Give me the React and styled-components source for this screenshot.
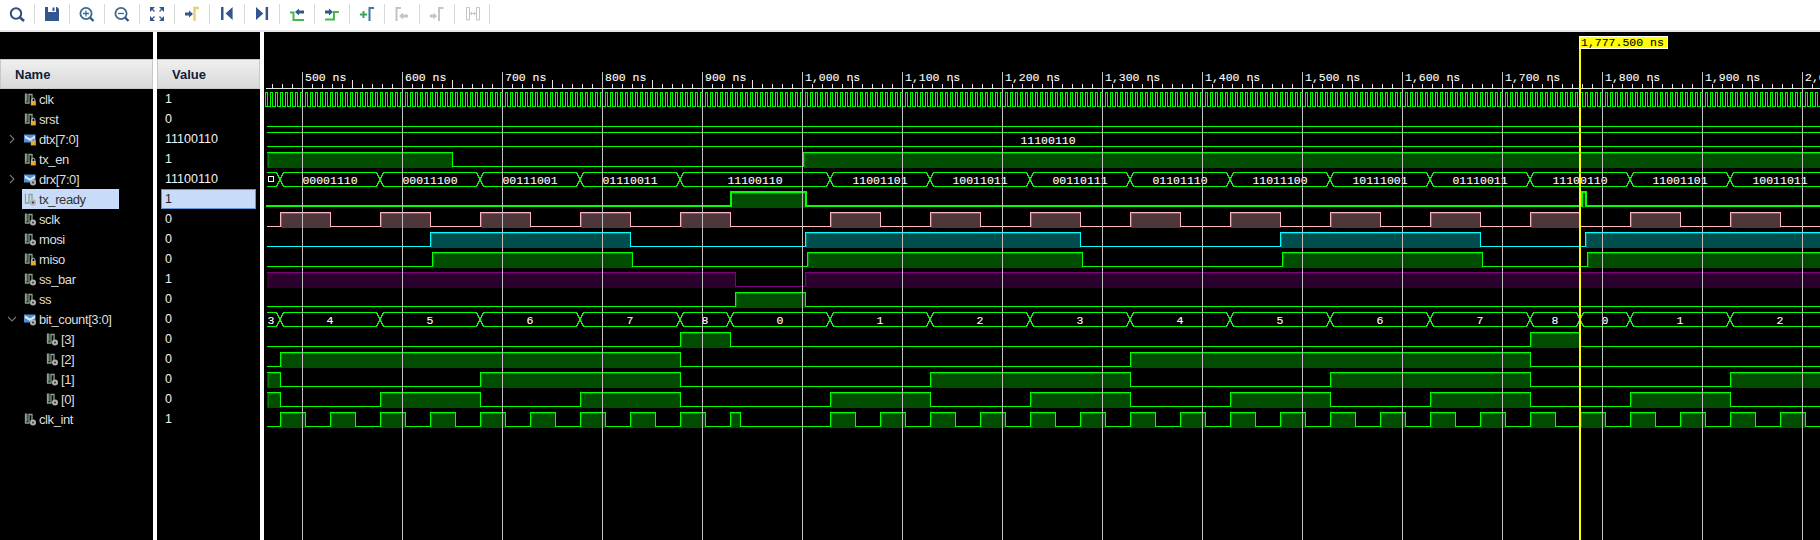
import React from "react";
import styled, { createGlobalStyle } from "styled-components";

const GlobalStyle = createGlobalStyle`
  html, body {
    margin: 0;
    padding: 0;
    height: 540px;
    overflow: hidden;
    background: #fff;
    font-family: "Liberation Sans", Arial, sans-serif;
  }
`;

const Page = styled.div`
  width: 1820px;
  height: 540px;
  display: flex;
  flex-direction: column;
  overflow: hidden;
`;
const Toolbar = styled.div`
  flex: 0 0 30px;
  display: flex;
  align-items: flex-start;
  background: #fff;
  border-bottom: 2px solid #e6e6e6;
`;
const ToolIcon = styled.svg`
  display: block;
  width: 34px;
  height: 30px;
  flex: none;
`;
const ToolSeparator = styled.div`
  flex: none;
  width: 1px;
  height: 20px;
  margin-top: 4px;
  background: #d9d9d9;
`;
const Main = styled.div`
  flex: 1;
  display: flex;
  gap: 4px;
  background: #fff;
  min-height: 0;
`;
const Column = styled.div`
  flex: 0 0 ${(props) => props.$width}px;
  background: #000;
  padding-top: 27px;
`;
const HeaderCell = styled.div`
  height: 30px;
  box-sizing: border-box;
  display: flex;
  align-items: center;
  padding: 1px 0 0 ${(props) => props.$pad}px;
  font-size: 13px;
  font-weight: bold;
  color: #10203a;
  background: linear-gradient(#efefef, #d9d9d9);
  border: 1px solid #c8c8c8;
`;
const NameRow = styled.div`
  height: 20px;
  display: flex;
  align-items: stretch;
`;
const ChevronSlot = styled.div`
  flex: 0 0 ${(props) => props.$width}px;
  display: flex;
  align-items: center;
  justify-content: flex-start;
  padding-left: 8px;
  box-sizing: border-box;
`;
const NameCell = styled.div`
  display: flex;
  align-items: center;
  gap: 3px;
  padding-left: 2px;
  box-sizing: border-box;
  width: ${(props) => (props.$selected ? "97px" : "auto")};
  font-size: 13px;
  letter-spacing: -0.4px;
  color: ${(props) => (props.$selected ? "#333" : "#dedede")};
  background: ${(props) => (props.$selected ? "#c8dcfa" : "transparent")};
`;
const ValueRow = styled.div`
  height: 20px;
  box-sizing: border-box;
  display: flex;
  align-items: center;
  font-size: 12.5px;
  margin: 0 4px;
  padding-left: 4px;
  color: ${(props) => (props.$selected ? "#222" : "#f2f2f2")};
  background: ${(props) => (props.$selected ? "#c8dcfa" : "transparent")};
  border: ${(props) => (props.$selected ? "1px solid #5b9bd5" : "none")};
  ${(props) => props.$selected && "padding-left: 3px;"}
`;
const WavePanel = styled.div`
  flex: 1;
  background: #000;
  min-width: 0;
`;
const WaveSvg = styled.svg`
  display: block;
  width: 1556px;
  height: 508px;
  font-family: "Liberation Mono", "Courier New", monospace;
  font-size: 11.5px;
`;
const WaveLabel = styled.text`
  fill: #fff;
  stroke: #fff;
  stroke-width: 0.1px;
`;
const CursorLabel = styled.text`
  fill: #000;
  stroke: #000;
  stroke-width: 0.1px;
`;

const BLUE = "#33568f";
const GREEN = "#45b84b";
const GREY = "#c4c4c4";

const toolIcons = [
  <>
    <circle cx="16" cy="13.5" r="5.2" fill="none" stroke="#2f4f7f" strokeWidth="2" />
    <path d="M20 17.5l4 3.5" stroke="#2f4f7f" strokeWidth="2.6" />
  </>,
  <>
    <path d="M45 7h12l2 2v12H45z" fill={BLUE} />
    <path d="M48 7h8v5h-8z" fill="#fff" />
    <path d="M52.5 7.5h2v3.5h-2z" fill={BLUE} />
  </>,
  <>
    <circle cx="86" cy="13.5" r="5.6" fill="none" stroke="#3c6a8e" strokeWidth="1.8" />
    <path d="M83 13.5h6M86 10.5v6" stroke="#3c6a8e" strokeWidth="1.3" />
    <path d="M90 17.5l3.5 3.5" stroke={BLUE} strokeWidth="2.4" />
  </>,
  <>
    <circle cx="121" cy="13.5" r="5.6" fill="none" stroke="#3c6a8e" strokeWidth="1.8" />
    <path d="M118 13.5h6" stroke="#3c6a8e" strokeWidth="1.3" />
    <path d="M125 17.5l3.5 3.5" stroke={BLUE} strokeWidth="2.4" />
  </>,
  <>
    <path d="M150 7h5l-5 5zM164 7h-5l5 5zM150 21h5l-5-5zM164 21h-5l5-5z" fill={BLUE} />
    <path
      d="M151 8l3.5 3.5M163 8l-3.5 3.5M151 20l3.5-3.5M163 20l-3.5-3.5"
      stroke={BLUE}
      strokeWidth="1.2"
    />
  </>,
  <>
    <path d="M185 12.5h4v-2l4 3.5-4 3.5v-2h-4z" fill={BLUE} />
    <path d="M194.5 21V8h4.5" fill="none" stroke="#e6cf72" strokeWidth="2.4" />
  </>,
  <>
    <path d="M221 7h2.5v13H221zM232.6 7v13l-7-6.5z" fill={BLUE} />
  </>,
  <>
    <path d="M256 7v13l7.3-6.5zM265.6 7h2.5v13h-2.5z" fill={BLUE} />
  </>,
  <>
    <path d="M290 12.5h3.5V20H304" fill="none" stroke={GREEN} strokeWidth="2" />
    <path d="M295 12l4-3.5v2h5v3h-5v2z" fill={BLUE} />
  </>,
  <>
    <path d="M325 19.5h9V12h5" fill="none" stroke={GREEN} strokeWidth="2" />
    <path d="M325 10.5h4v-2l4 3.5-4 3.5v-2h-4z" fill={BLUE} />
  </>,
  <>
    <path d="M360 14.5h7M363.5 11v7" stroke="#3da651" strokeWidth="2" />
    <path d="M369.5 21V8h4.5" fill="none" stroke="#3b78a8" strokeWidth="2" />
  </>,
  <>
    <path d="M396.5 21V8h4.5" fill="none" stroke={GREY} strokeWidth="2" />
    <path d="M399 16l4-3.5v2h5v3h-5v2z" fill={GREY} />
  </>,
  <>
    <path d="M430 14.5h3.5v-2l3.5 3.5-3.5 3.5v-2H430z" fill={GREY} />
    <path d="M439 21V8h4.5" fill="none" stroke={GREY} strokeWidth="2" />
  </>,
  <>
    <path d="M466.5 7.5v12.5h3V7.5zM476.5 7.5v12.5h3V7.5z" fill="none" stroke={GREY} strokeWidth="1" />
    <path d="M470 13.5h6" stroke={GREY} strokeWidth="1" />
    <path d="M470 13.5l2-2v4zM476 13.5l-2-2v4z" fill={GREY} />
  </>,
];

function Chevron({ open }) {
  return (
    <svg width="8" height="10" viewBox="0 0 8 10">
      {open ? (
        <path d="M0 3l4 4 4-4" fill="none" stroke="#777" strokeWidth="1.1" />
      ) : (
        <path d="M2 1l4 4-4 4" fill="none" stroke="#777" strokeWidth="1.1" />
      )}
    </svg>
  );
}

function Badge({ lock }) {
  if (lock) {
    return (
      <>
        <path d="M7.7 8V6.8a1.6 1.6 0 0 1 3.2 0V8" fill="none" stroke="#c4c4c4" strokeWidth="1" />
        <rect x="6.8" y="8" width="5" height="4.4" fill="#eda92c" />
      </>
    );
  }
  return (
    <>
      <circle cx="9" cy="9.4" r="3" fill="#b0b0b0" />
      <circle cx="9" cy="9.4" r="1" fill="#333" />
    </>
  );
}

function SignalIcon({ bus, lock }) {
  return (
    <svg width="12" height="13" viewBox="0 0 12 13" style={{ flex: "none" }}>
      {bus ? (
        <>
          <path d="M0 1.5h11.5v8H0z" fill="#4f8fd6" />
          <path d="M1 2.5l5 3 5-3v2.5l-5 3-5-3z" fill="#dcebfa" />
        </>
      ) : (
        <>
          <path d="M1.5 0.5v9.5H5V1.5h3v8" fill="none" stroke="#86a58d" strokeWidth="1.3" />
          <path d="M2.9 0.5v8" stroke="#d5e0d8" strokeWidth="0.9" />
        </>
      )}
      <Badge lock={lock} />
    </svg>
  );
}

const clkEdges = [];
for (let x = 265; x < 1830; x += 5) {
  clkEdges.push(x, x + 2);
}

const clkIntEdges = [];
for (let x = 280; x < 1830; x += 50) {
  if (x === 780) continue;
  clkIntEdges.push(x, x === 730 ? 740 : x + 25);
}

const sclkEdges = [];
for (let x = 280; x < 1830; x += 100) {
  if (x === 780) x = 830;
  sclkEdges.push(x, x === 680 ? 730 : x + 50);
}

const busTimes = [280, 380, 480, 580, 680, 730, 830, 930, 1030, 1130, 1230, 1330, 1430, 1530, 1580, 1630, 1730, 1830];
const drxTimes = [280, 380, 480, 580, 680, 830, 930, 1030, 1130, 1230, 1330, 1430, 1530, 1630, 1730, 1830];
const drxLabels = [
  "00001110", "00011100", "00111001", "01110011", "11100110", "11001101", "10011011", "00110111",
  "01101110", "11011100", "10111001", "01110011", "11100110", "11001101", "10011011",
];
const countLabels = ["4", "5", "6", "7", "8", "0", "1", "2", "3", "4", "5", "6", "7", "8", "0", "1", "2"];

const GREEN_LINE = "#00ff00";

const signals = [
  { name: "clk", value: "1", lock: true, wave: { color: GREEN_LINE, init: 0, edges: clkEdges, noFill: true } },
  { name: "srst", value: "0", lock: true, wave: { color: GREEN_LINE, init: 0, edges: [] } },
  { name: "dtx[7:0]", value: "11100110", lock: true, bus: true, busWave: { times: [], labels: [{ x: 1048, text: "11100110" }] } },
  { name: "tx_en", value: "1", lock: true, wave: { color: GREEN_LINE, init: 1, edges: [452, 803] } },
  {
    name: "drx[7:0]",
    value: "11100110",
    bus: true,
    busWave: {
      times: drxTimes,
      marker: true,
      labels: drxLabels.map((text, i) => ({ x: (drxTimes[i] + drxTimes[i + 1]) / 2, text })),
    },
  },
  { name: "tx_ready", value: "1", selected: true, wave: { color: GREEN_LINE, init: 0, edges: [730, 805, 1581, 1585], thick: true } },
  { name: "sclk", value: "0", wave: { color: "#ffb6c1", init: 0, edges: sclkEdges } },
  { name: "mosi", value: "0", wave: { color: "#00ffff", init: 0, edges: [430, 630, 805, 1080, 1280, 1480, 1585] } },
  { name: "miso", value: "0", lock: true, wave: { color: GREEN_LINE, init: 0, edges: [432, 632, 807, 1082, 1282, 1482, 1587] } },
  { name: "ss_bar", value: "1", wave: { color: "#800080", init: 1, edges: [735, 805], bandLevel: 0.34 } },
  { name: "ss", value: "0", wave: { color: GREEN_LINE, init: 0, edges: [735, 805] } },
  {
    name: "bit_count[3:0]",
    value: "0",
    bus: true,
    open: true,
    busWave: {
      times: busTimes,
      labels: [
        { x: 271, text: "3" },
        ...countLabels.map((text, i) => ({ x: (busTimes[i] + busTimes[i + 1]) / 2, text })),
      ],
    },
  },
  { name: "[3]", value: "0", child: true, wave: { color: GREEN_LINE, init: 0, edges: [680, 730, 1530, 1580] } },
  { name: "[2]", value: "0", child: true, wave: { color: GREEN_LINE, init: 0, edges: [280, 680, 1130, 1530] } },
  { name: "[1]", value: "0", child: true, wave: { color: GREEN_LINE, init: 1, edges: [280, 480, 680, 930, 1130, 1330, 1530, 1730] } },
  {
    name: "[0]",
    value: "0",
    child: true,
    wave: { color: GREEN_LINE, init: 1, edges: [280, 380, 480, 580, 680, 830, 930, 1030, 1130, 1230, 1330, 1430, 1530, 1630, 1730] },
  },
  { name: "clk_int", value: "1", wave: { color: GREEN_LINE, init: 0, edges: clkIntEdges } },
];

const gridTimes = [];
for (let ns = 500; ns <= 2000; ns += 100) gridTimes.push(ns);
const ticks = [];
for (let x = 272; x < 1820; x += 10) ticks.push(x);

const LEFT = 267;
const RIGHT = 1820;

// scale a hex line colour down to the dim band colour below it
const dim = (hex, k) => {
  const n = parseInt(hex.slice(1), 16);
  const part = (s) => Math.round(((n >> s) & 255) * k);
  return `rgb(${part(16)},${part(8)},${part(0)})`;
};

function BitWave({ row, wave }) {
  const high = 92.5 + row * 20;
  const low = 106.5 + row * 20;
  const top = wave.thick ? high - 0.5 : high;
  const bottom = wave.thick ? low - 0.5 : low;
  const bands = [];
  let state = wave.init;
  let from = LEFT;
  let d = `M${wave.thick ? LEFT - 1 : LEFT} ${state ? top : bottom}`;
  wave.edges.forEach((e) => {
    const x = e + 0.5;
    if (state) bands.push([from, x]);
    state = state ? 0 : 1;
    d += `H${x}V${state ? top : bottom}`;
    from = x;
  });
  d += `H${RIGHT}`;
  if (state) bands.push([from, RIGHT]);
  return (
    <g>
      {!wave.noFill &&
        bands.map(([a, b]) => (
          <g key={a}>
            <rect x={a} y={high} width={b - a} height={low - high + 1} fill={dim(wave.color, wave.bandLevel || 0.3)} />
            <path d={`M${a + 1} ${low}V${high + 1}H${b}`} fill="none" stroke={dim(wave.color, 0.5)} />
          </g>
        ))}
      <path d={d} fill="none" stroke={wave.color} strokeWidth={wave.thick ? 2 : 1} />
    </g>
  );
}

function BusWave({ row, wave }) {
  const high = 92.5 + row * 20;
  const low = 106.5 + row * 20;
  let top = `M${LEFT} ${high}`;
  let bottom = `M${LEFT} ${low}`;
  wave.times.forEach((t) => {
    top += `H${t - 3.5}L${t + 3.5} ${low}`;
    bottom += `H${t - 3.5}L${t + 3.5} ${high}`;
    // swap so each path carries on along the rail it crossed to
    [top, bottom] = [bottom, top];
  });
  top += `H${RIGHT}`;
  bottom += `H${RIGHT}`;
  return (
    <g>
      <path d={top} fill="none" stroke={GREEN_LINE} />
      <path d={bottom} fill="none" stroke={GREEN_LINE} />
      {wave.marker && <rect x="268.5" y={high + 4} width="5" height="5" fill="none" stroke="#fff" />}
      {wave.labels.map((l) => (
        <WaveLabel key={l.x} x={l.x} y={high + 11} textAnchor="middle">
          {l.text}
        </WaveLabel>
      ))}
    </g>
  );
}

function Waveform() {
  return (
    <WaveSvg viewBox="264 32 1556 508" shapeRendering="crispEdges">
      {signals.map((s, i) =>
        s.wave ? <BitWave key={s.name} row={i} wave={s.wave} /> : <BusWave key={s.name} row={i} wave={s.busWave} />,
      )}

      <path d={`M266 88.5H${RIGHT}`} stroke="#e4e4e4" />
      {ticks.map((x) => (
        <path key={x} d={`M${x + 0.5} ${(x - 302) % 50 === 0 ? 80 : 84}V88`} stroke="#e4e4e4" />
      ))}
      {gridTimes.map((ns) => {
        const x = ns - 198;
        const text = ns >= 1000 ? `${Math.floor(ns / 1000)},${String(ns % 1000).padStart(3, "0")} ns` : `${ns} ns`;
        return (
          <g key={ns}>
            <path d={`M${x + 0.5} 72V540`} stroke="#c0c0c0" />
            <WaveLabel x={x + 3} y="81">
              {text}
            </WaveLabel>
          </g>
        );
      })}

      <path d="M1580 48V540" stroke="#ffff00" strokeWidth="2" />
      <rect x="1579.5" y="36.5" width="88" height="12" fill="#ffff00" stroke="#fff" />
      <CursorLabel x="1581" y="46">
        1,777.500 ns
      </CursorLabel>
    </WaveSvg>
  );
}

export default function App() {
  return (
    <Page>
      <GlobalStyle />
      <Toolbar>
        {toolIcons.map((icon, i) => (
          <React.Fragment key={i}>
            <ToolIcon viewBox={`${i * 35} 0 34 30`}>{icon}</ToolIcon>
            <ToolSeparator />
          </React.Fragment>
        ))}
      </Toolbar>
      <Main>
        <Column $width={153}>
          <HeaderCell $pad={14}>Name</HeaderCell>
          {signals.map((s) => (
            <NameRow key={s.name}>
              <ChevronSlot $width={s.child ? 44 : 22}>
                {s.bus && <Chevron open={s.open} />}
              </ChevronSlot>
              <NameCell $selected={s.selected}>
                <SignalIcon bus={s.bus} lock={s.lock} />
                {s.name}
              </NameCell>
            </NameRow>
          ))}
        </Column>
        <Column $width={103}>
          <HeaderCell $pad={14}>Value</HeaderCell>
          {signals.map((s) => (
            <ValueRow key={s.name} $selected={s.selected}>
              {s.value}
            </ValueRow>
          ))}
        </Column>
        <WavePanel>
          <Waveform />
        </WavePanel>
      </Main>
    </Page>
  );
}
